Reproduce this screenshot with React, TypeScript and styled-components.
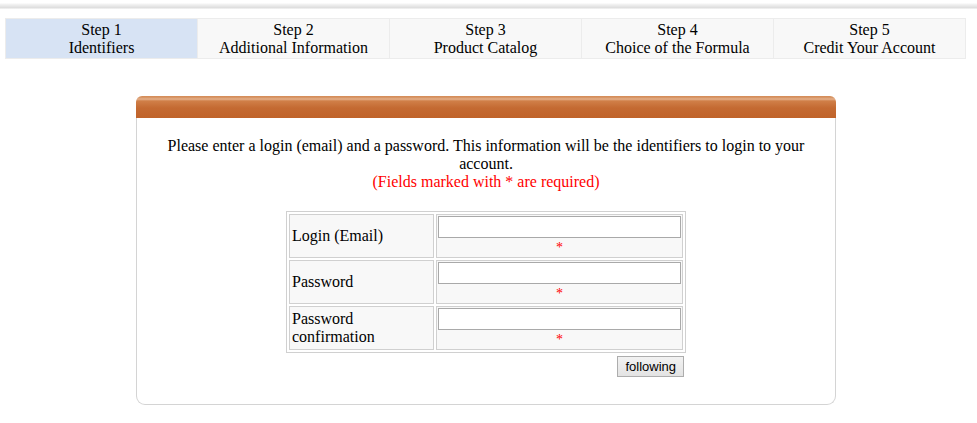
import styled, { createGlobalStyle } from 'styled-components'

const GlobalStyle = createGlobalStyle`
  body {
    margin: 0;
    background: #fff;
    font-family: 'Liberation Serif', 'Times New Roman', serif;
    font-size: 16px;
    color: #000;
  }
`

const TopShade = styled.div`
  height: 9px;
  background: linear-gradient(#fff 0, #fff 3px, #f4f4f4 4px, #dcdcdc 8px, #fff 9px);
`

const Steps = styled.div`
  display: flex;
  margin: 9px 11px 0 5px;
  border: 1px solid #ececec;
`

const Step = styled.div<{ active?: boolean }>`
  flex: 1;
  text-align: center;
  line-height: 18px;
  padding: 2px 0 1px;
  background: ${(p) => (p.active ? '#d7e3f4' : '#f8f8f8')};
  border-left: 1px solid #ececec;

  &:first-child {
    border-left: none;
  }
`

const Box = styled.div`
  width: 700px;
  margin: 37px 0 0 136px;
`

const BoxHead = styled.div`
  height: 22px;
  border-radius: 6px 6px 0 0;
  background: linear-gradient(#d48a55 0, #d99a6c 2px, #e6b38f 3px, #d07f48 5px, #c46a32 12px, #c0632a 22px);
`

const BoxBody = styled.div`
  border: 1px solid #d4d4d4;
  border-top: none;
  border-radius: 0 0 9px 9px;
  padding: 19px 20px 27px;
  text-align: center;
  line-height: 18px;
`

const Required = styled.div`
  color: #f00;
`

const FormTable = styled.table`
  margin: 20px auto 0;
  width: 400px;
  border: 1px solid #d0d0d0;
  border-spacing: 2px;
  text-align: left;
`

const Label = styled.td`
  width: 141px;
  padding: 1px 2px;
  border: 1px solid #d0d0d0;
  background: #f8f8f8;
  vertical-align: middle;
  line-height: 18px;
`

const Field = styled.td`
  padding: 1px 1px 0;
  border: 1px solid #d0d0d0;
  background: #f8f8f8;
  text-align: center;
  line-height: 18px;
`

const Input = styled.input`
  display: block;
  box-sizing: border-box;
  width: 243px;
  height: 22px;
  margin: 0;
  border: 1px solid #a9a9a9;
  background: #fff;
`

const Star = styled.div`
  color: #f00;
  font-size: 14px;
  line-height: 19px;
  height: 19px;
`

const Actions = styled.div`
  width: 400px;
  margin: 3px auto 0;
  text-align: right;
`

const Button = styled.button`
  font-family: 'Liberation Sans', Arial, sans-serif;
  font-size: 13px;
  height: 21px;
  padding: 0 7px;
  margin-right: 2px;
  border: 1px solid #adadad;
  border-radius: 0;
  background: linear-gradient(#f2f2f2, #e3e3e3);
  color: #000;
`

const steps = [
  ['Step 1', 'Identifiers'],
  ['Step 2', 'Additional Information'],
  ['Step 3', 'Product Catalog'],
  ['Step 4', 'Choice of the Formula'],
  ['Step 5', 'Credit Your Account'],
]

const fields = [
  { label: 'Login (Email)', type: 'text' },
  { label: 'Password', type: 'password' },
  { label: 'Password confirmation', type: 'password' },
]

const App = () => (
  <>
    <GlobalStyle />
    <TopShade />
    <Steps>
      {steps.map(([num, name], i) => (
        <Step key={num} active={i === 0}>
          {num}
          <br />
          {name}
        </Step>
      ))}
    </Steps>
    <Box>
      <BoxHead />
      <BoxBody>
        Please enter a login (email) and a password. This information will be the identifiers to login to your
        account.
        <Required>(Fields marked with * are required)</Required>
        <FormTable>
          <tbody>
            {fields.map((f) => (
              <tr key={f.label}>
                <Label>{f.label}</Label>
                <Field>
                  <Input type={f.type} />
                  <Star>*</Star>
                </Field>
              </tr>
            ))}
          </tbody>
        </FormTable>
        <Actions>
          <Button>following</Button>
        </Actions>
      </BoxBody>
    </Box>
  </>
)

export default App
